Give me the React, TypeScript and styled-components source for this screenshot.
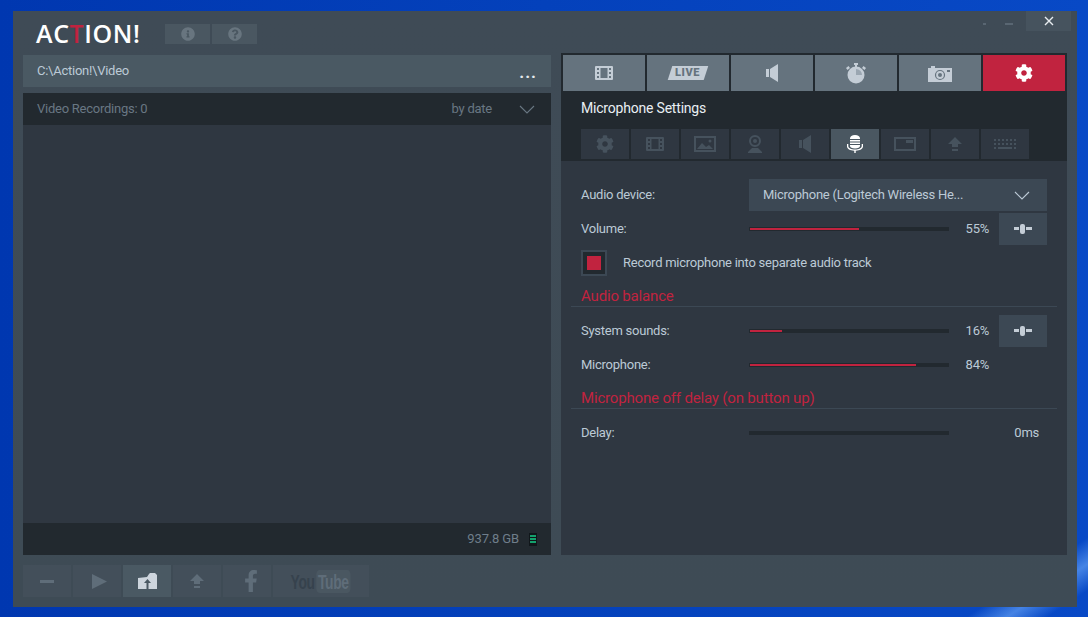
import React from 'react';
import styled, { createGlobalStyle } from 'styled-components';
import { FaCog, FaFacebookF, FaInfoCircle, FaQuestionCircle } from 'react-icons/fa';

const GlobalStyle = createGlobalStyle`
  html, body {
    margin: 0;
    padding: 0;
    height: 100%;
    overflow: hidden;
  }
  body {
    font-family: Roboto, "Liberation Sans", sans-serif;
    background:
      linear-gradient(146.7deg, transparent 94%, rgba(120, 180, 255, 0.55) 96%, transparent 98%),
      linear-gradient(90deg, #0037b0 0%, #0441bb 50%, #0849c6 100%);
  }
`;

const Desktop = styled.div`
  box-sizing: border-box;
  width: 1088px;
  height: 617px;
  padding: 11px 11px 10px 13px;
`;

const Window = styled.div`
  box-sizing: border-box;
  height: 596px;
  padding: 0 10px 10px;
  display: flex;
  flex-direction: column;
  background: linear-gradient(180deg, #3f4b56 0%, #3e4b55 100%);
`;

const TitleBar = styled.header`
  height: 44px;
  flex: none;
  display: flex;
  align-items: flex-start;
`;

const Logo = styled.div`
  width: 104px;
  margin: 10px 25px 0 13px;
  font: 600 25px/24px "Open Sans", sans-serif;
  color: #fff;
  white-space: nowrap;
  letter-spacing: 0.6px;
  span {
    color: #c1233f;
  }
`;

const HelpGroup = styled.div`
  display: flex;
  gap: 2px;
  margin-top: 13px;
`;

const HelpButton = styled.button`
  width: 45px;
  height: 20px;
  padding: 0;
  border: 0;
  display: flex;
  align-items: center;
  justify-content: center;
  font-size: 14px;
  color: #68757f;
  background: #4a5761;
`;

const WindowControls = styled.div`
  margin: 0 -4px 0 auto;
  display: flex;
  align-items: flex-start;
`;

const MinDot = styled.i<{ $w: number }>`
  display: block;
  width: ${({ $w }) => $w}px;
  height: 2px;
  margin: 12px ${({ $w }) => ($w > 4 ? 13 : 19)}px 0 0;
  background: #596672;
`;

const CloseButton = styled.button`
  width: 45px;
  height: 20px;
  padding: 0;
  border: 0;
  display: flex;
  align-items: center;
  justify-content: center;
  color: #e8edf1;
  background: #46535e;
`;

const Main = styled.main`
  flex: 1;
  min-height: 0;
  display: flex;
  gap: 10px;
`;

const LeftColumn = styled.section`
  width: 528px;
  display: flex;
  flex-direction: column;
  gap: 6px;
`;

const PathBar = styled.div`
  height: 32px;
  flex: none;
  display: flex;
  align-items: center;
  justify-content: space-between;
  padding: 0 14px 2px 14px;
  box-sizing: border-box;
  font-size: 13px;
  letter-spacing: -0.25px;
  color: #bccad6;
  background: #4a5963;
`;

const Dots = styled.span`
  font-size: 17px;
  font-weight: 700;
  color: #e4e9ed;
  letter-spacing: 1px;
  margin-top: 4px;
`;

const ListPanel = styled.div`
  flex: 1;
  display: flex;
  flex-direction: column;
  background: #2f3741;
`;

const ListHeader = styled.div`
  height: 32px;
  flex: none;
  display: flex;
  align-items: center;
  padding: 0 16px 0 14px;
  font-size: 13px;
  letter-spacing: -0.25px;
  color: #697783;
  background: #22292f;
  span {
    margin-top: -2px;
  }
`;

const SortLabel = styled.span`
  margin: 0 27px 0 auto;
`;

const ListBody = styled.div`
  flex: 1;
`;

const ListFooter = styled.div`
  height: 32px;
  flex: none;
  display: flex;
  align-items: center;
  justify-content: flex-end;
  gap: 10px;
  padding: 0 14px;
  font-size: 13px;
  letter-spacing: -0.15px;
  color: #6f7e8b;
  background: #22292f;
  span {
    margin-top: -2px;
  }
`;

const Battery = styled.div`
  box-sizing: border-box;
  width: 8px;
  height: 13px;
  padding: 2px 1px;
  display: flex;
  flex-direction: column;
  gap: 1px;
  background: #10161a;
  i {
    flex: 1;
    background: #14a06c;
  }
`;

const RightColumn = styled.section`
  width: 506px;
  margin-top: -2px;
  display: flex;
  flex-direction: column;
  background: #2f3741;
`;

const DarkHead = styled.div`
  flex: none;
  padding: 2px 2px 2px;
  background: #22292f;
`;

const MainTabs = styled.div`
  display: grid;
  grid-template-columns: repeat(6, 82px);
  gap: 2px;
`;

const MainTab = styled.button<{ $active?: boolean }>`
  height: 36px;
  padding: 0;
  border: 0;
  display: flex;
  align-items: center;
  justify-content: center;
  color: ${({ $active }) => ($active ? '#fff' : '#c4cdd6')};
  background: ${({ $active }) => ($active ? '#c1233f' : '#65737e')};
`;

const LiveBadge = styled.span`
  width: 36px;
  height: 14px;
  display: flex;
  align-items: center;
  justify-content: center;
  transform: skewX(-18deg);
  background: #c4cdd6;
  b {
    display: block;
    transform: skewX(18deg);
    font: 900 11px/14px Roboto, sans-serif;
    letter-spacing: 0.6px;
    color: #65737e;
  }
`;

const PanelTitle = styled.h2`
  height: 38px;
  margin: 0;
  padding-left: 18px;
  font-size: 14px;
  font-weight: 400;
  letter-spacing: -0.2px;
  line-height: 34px;
  color: #e9eff4;
`;

const SubTabs = styled.div`
  display: flex;
  gap: 2px;
  padding-left: 18px;
`;

const SubTab = styled.button<{ $active?: boolean }>`
  width: 48px;
  height: 30px;
  padding: 0;
  border: 0;
  display: flex;
  align-items: center;
  justify-content: center;
  color: ${({ $active }) => ($active ? '#fff' : '#46525d')};
  background: ${({ $active }) => ($active ? '#4a5761' : '#2f3741')};
`;

const SettingsBody = styled.div`
  flex: 1;
  padding: 18px 20px 0;
`;

const Row = styled.div<{ $gapBelow?: number }>`
  height: 32px;
  margin-bottom: ${({ $gapBelow }) => $gapBelow ?? 2}px;
  display: grid;
  grid-template-columns: 168px 200px 40px 58px;
  align-items: center;
  font-size: 13px;
  letter-spacing: -0.25px;
  color: #bccad6;
  > span {
    margin-top: -2px;
  }
`;

const SelectBox = styled.div`
  grid-column: 2 / -1;
  height: 32px;
  display: flex;
  align-items: center;
  justify-content: space-between;
  padding: 0 17px 0 14px;
  color: #bccad6;
  background: #3c4854;
  span {
    margin-top: -2px;
  }
`;

const Track = styled.div`
  box-sizing: border-box;
  height: 4px;
  padding: 1px;
  background: #22292f;
`;

const Fill = styled.div`
  height: 2px;
  background: #c1233f;
`;

const Value = styled.span<{ $long?: boolean }>`
  text-align: right;
  grid-column: ${({ $long }) => ($long ? '3 / -1' : 'auto')};
  padding-right: ${({ $long }) => ($long ? 8 : 0)}px;
`;

const TuneButton = styled.button`
  width: 48px;
  height: 32px;
  margin-left: 10px;
  padding: 0;
  border: 0;
  display: flex;
  align-items: center;
  justify-content: center;
  color: #c4cdd6;
  background: #3c4854;
`;

const CheckRow = styled.label`
  height: 26px;
  margin-top: 5px;
  display: flex;
  align-items: center;
  gap: 16px;
  font-size: 13px;
  letter-spacing: -0.25px;
  color: #bccad6;
`;

const CheckText = styled.span`
  margin-top: -2px;
`;

const CheckBox = styled.span`
  box-sizing: border-box;
  width: 26px;
  height: 26px;
  padding: 4px;
  border: 2px solid #3c4854;
  background: #22292f;
  i {
    display: block;
    width: 100%;
    height: 100%;
    background: #c1233f;
  }
`;

const SectionTitle = styled.h3<{ $top: number; $bottom: number }>`
  box-sizing: border-box;
  height: 20px;
  margin: ${({ $top }) => $top}px -10px ${({ $bottom }) => $bottom}px;
  padding-left: 10px;
  border-bottom: 1px solid #3c4854;
  font-size: 15px;
  font-weight: 400;
  letter-spacing: -0.17px;
  line-height: 18px;
  color: #c1233f;
`;

const BottomBar = styled.footer`
  flex: none;
  margin-top: 10px;
  display: flex;
  gap: 2px;
`;

const ToolButton = styled.button<{ $active?: boolean; $wide?: boolean }>`
  width: ${({ $wide }) => ($wide ? 96 : 48)}px;
  height: 32px;
  padding: 0;
  border: 0;
  display: flex;
  align-items: center;
  justify-content: center;
  color: ${({ $active }) => ($active ? '#cdd5dd' : '#5f6d79')};
  background: ${({ $active }) => ($active ? '#4a5963' : '#434f5a')};
`;

const PlayGlyph = styled.svg`
  margin-left: 4px;
`;

const FacebookGlyph = styled(FaFacebookF)`
  margin-left: 8px;
`;

const YouTube = styled.span`
  display: flex;
  align-items: center;
  font: 700 21px/23px "Liberation Sans", sans-serif;
  letter-spacing: -0.5px;
  transform: scaleX(0.66);
  color: #36424d;
  b {
    margin-left: 2px;
    padding: 0 3px;
    border-radius: 5px;
    color: #5f6d79;
    background: #4a5761;
  }
`;

const FilmIcon = () => (
  <svg width="18" height="14" viewBox="0 0 18 14" fill="currentColor">
    <path fillRule="evenodd" d="M1 0h16a1 1 0 0 1 1 1v12a1 1 0 0 1-1 1H1a1 1 0 0 1-1-1V1a1 1 0 0 1 1-1zm1 2v2h2V2H2zm0 4v2h2V6H2zm0 4v2h2v-2H2zm12-8v2h2V2h-2zm0 4v2h2V6h-2zm0 4v2h2v-2h-2zM5.500 2v10h7V2h-7z" />
  </svg>
);

const SpeakerIcon = () => (
  <svg width="12" height="18" viewBox="0 0 12 18" fill="currentColor">
    <path d="M0 5h3v8H0zM4 5l8-5v18l-8-5z" />
  </svg>
);

const TimerIcon = () => (
  <svg width="20" height="21" viewBox="0 0 20 21" fill="currentColor">
    <rect x="8" y="0" width="4" height="2" />
    <rect x="9" y="2" width="2" height="2" />
    <path d="M0 5l2.500-2 1.500 2-2.500 2zM20 5l-2.500-2-1.500 2 2.500 2z" />
    <circle cx="10" cy="12" r="8.500" />
    <path d="M10 6a6 6 0 0 1 6 6h-6z" fill="#9aa6b1" />
  </svg>
);

const CameraIcon = () => (
  <svg width="24" height="17" viewBox="0 0 24 17" fill="currentColor">
    <path d="M0 3h3V1h4v2h17v14H0z" />
    <circle cx="12" cy="10" r="4.500" fill="none" stroke="#65737e" strokeWidth="1.200" />
    <circle cx="12" cy="10" r="2" fill="#65737e" />
    <rect x="19" y="5" width="3" height="2" fill="#65737e" />
  </svg>
);

const ImageIcon = () => (
  <svg width="22" height="16" viewBox="0 0 22 16" fill="currentColor">
    <path fillRule="evenodd" d="M0 0h22v16H0zm2 2v12h18V2z" />
    <circle cx="16" cy="5" r="1.500" />
    <path d="M3 13l5-6 4 4 3-2 4 4z" />
  </svg>
);

const WebcamIcon = () => (
  <svg width="14" height="18" viewBox="0 0 14 18" fill="currentColor">
    <path fillRule="evenodd" d="M7 0a6 6 0 1 1 0 12A6 6 0 0 1 7 0zm0 2a4 4 0 1 0 0 8 4 4 0 0 0 0-8z" />
    <circle cx="7" cy="6" r="2" />
    <path d="M4 13h6l4 4v1H0v-1z" />
  </svg>
);

const MicIcon = () => (
  <svg width="16" height="18" viewBox="0 0 16 18" fill="currentColor">
    <path d="M3 3.500C3 1.500 5 0 8 0s5 1.500 5 3.500V4H3zM3 5h10v1.500H3zM3 7.500h10V9H3zM3 10h10v1C13 12.500 11 13.500 8 13.500S3 12.500 3 11z" />
    <path d="M0 9h1.300v2c0 2 2.800 3.500 6.700 3.500s6.700-1.500 6.700-3.500V9H16v2.500c0 2.300-3 4-7.300 4.200V18H7.300v-2.300C3 15.500 0 13.800 0 11.500z" />
  </svg>
);

const FrameIcon = () => (
  <svg width="22" height="14" viewBox="0 0 22 14" fill="currentColor">
    <path fillRule="evenodd" d="M0 0h22v14H0zm2 2v10h18V2z" />
    <rect x="12" y="3" width="7" height="3" />
  </svg>
);

const UploadIcon = () => (
  <svg width="14" height="15" viewBox="0 0 14 15" fill="currentColor">
    <path d="M7 0l7 7H10v3H4V7H0zM4 12h6v2H4z" />
  </svg>
);

const KeyboardIcon = () => (
  <svg width="22" height="11" viewBox="0 0 22 11" fill="currentColor">
    {[0, 4, 8, 12, 16, 20].map((x) => (
      <rect key={`a${x}`} x={x} y="0" width="2" height="2" />
    ))}
    {[0, 4, 8, 12, 16, 20].map((x) => (
      <rect key={`b${x}`} x={x} y="4" width="2" height="2" />
    ))}
    <rect x="0" y="8" width="2" height="2" />
    <rect x="20" y="8" width="2" height="2" />
    <rect x="4" y="8" width="14" height="2" />
  </svg>
);

const TuneIcon = () => (
  <svg width="18" height="10" viewBox="0 0 18 10" fill="currentColor">
    <rect x="0" y="3" width="5" height="3" />
    <rect x="6" y="0" width="5" height="10" rx="2" />
    <rect x="12" y="3" width="6" height="3" />
  </svg>
);

const Chevron = () => (
  <svg width="16" height="9" viewBox="0 0 16 9" fill="none" stroke="currentColor" strokeWidth="1.100">
    <path d="M1 1l7 7 7-7" />
  </svg>
);

const FolderUpIcon = () => (
  <svg width="19" height="16" viewBox="0 0 19 16" fill="currentColor">
    <path d="M0 5l9-1 2-3 1-1h5l2 2v14H0z" />
    <path d="M9.500 6L6 10h2.500v6h2v-6H13z" fill="#4a5963" />
  </svg>
);

const subTabIcons = [
  <FaCog key="gear" size={18} />,
  <FilmIcon key="film" />,
  <ImageIcon key="image" />,
  <WebcamIcon key="webcam" />,
  <SpeakerIcon key="speaker" />,
  <MicIcon key="mic" />,
  <FrameIcon key="frame" />,
  <UploadIcon key="upload" />,
  <KeyboardIcon key="keyboard" />,
];

const Slider = ({ value }: { value: number }) => (
  <Track>
    <Fill style={{ width: `${value}%` }} />
  </Track>
);

const App = () => (
  <>
    <GlobalStyle />
    <Desktop>
      <Window>
        <TitleBar>
          <Logo>
            AC<span>T</span>ION!
          </Logo>
          <HelpGroup>
            <HelpButton>
              <FaInfoCircle />
            </HelpButton>
            <HelpButton>
              <FaQuestionCircle />
            </HelpButton>
          </HelpGroup>
          <WindowControls>
            <MinDot $w={3} />
            <MinDot $w={8} />
            <CloseButton>
              <svg width="10" height="10" viewBox="0 0 10 10" stroke="currentColor" strokeWidth="1.400">
                <path d="M1 1l8 8M9 1l-8 8" />
              </svg>
            </CloseButton>
          </WindowControls>
        </TitleBar>
        <Main>
          <LeftColumn>
            <PathBar>
              <span>C:\Action!\Video</span>
              <Dots>...</Dots>
            </PathBar>
            <ListPanel>
              <ListHeader>
                <span>Video Recordings: 0</span>
                <SortLabel>by date</SortLabel>
                <Chevron />
              </ListHeader>
              <ListBody />
              <ListFooter>
                <span>937.8 GB</span>
                <Battery>
                  <i />
                  <i />
                  <i />
                </Battery>
              </ListFooter>
            </ListPanel>
          </LeftColumn>
          <RightColumn>
            <DarkHead>
              <MainTabs>
                <MainTab>
                  <FilmIcon />
                </MainTab>
                <MainTab>
                  <LiveBadge>
                    <b>LIVE</b>
                  </LiveBadge>
                </MainTab>
                <MainTab>
                  <SpeakerIcon />
                </MainTab>
                <MainTab>
                  <TimerIcon />
                </MainTab>
                <MainTab>
                  <CameraIcon />
                </MainTab>
                <MainTab $active>
                  <FaCog size={18} />
                </MainTab>
              </MainTabs>
              <PanelTitle>Microphone Settings</PanelTitle>
              <SubTabs>
                {subTabIcons.map((icon, index) => (
                  <SubTab key={index} $active={index === 5}>
                    {icon}
                  </SubTab>
                ))}
              </SubTabs>
            </DarkHead>
            <SettingsBody>
              <Row>
                <span>Audio device:</span>
                <SelectBox>
                  <span>Microphone (Logitech Wireless He...</span>
                  <Chevron />
                </SelectBox>
              </Row>
              <Row $gapBelow={0}>
                <span>Volume:</span>
                <Slider value={55} />
                <Value>55%</Value>
                <TuneButton>
                  <TuneIcon />
                </TuneButton>
              </Row>
              <CheckRow>
                <CheckBox>
                  <i />
                </CheckBox>
                <CheckText>Record microphone into separate audio track</CheckText>
              </CheckRow>
              <SectionTitle $top={11} $bottom={8}>
                Audio balance
              </SectionTitle>
              <Row>
                <span>System sounds:</span>
                <Slider value={16} />
                <Value>16%</Value>
                <TuneButton>
                  <TuneIcon />
                </TuneButton>
              </Row>
              <Row $gapBelow={0}>
                <span>Microphone:</span>
                <Slider value={84} />
                <Value>84%</Value>
              </Row>
              <SectionTitle $top={8} $bottom={8}>
                Microphone off delay (on button up)
              </SectionTitle>
              <Row>
                <span>Delay:</span>
                <Slider value={0} />
                <Value $long>0ms</Value>
              </Row>
            </SettingsBody>
          </RightColumn>
        </Main>
        <BottomBar>
          <ToolButton>
            <svg width="14" height="3" viewBox="0 0 14 3" fill="currentColor">
              <rect width="14" height="3" />
            </svg>
          </ToolButton>
          <ToolButton>
            <PlayGlyph width="15" height="15" viewBox="0 0 15 15" fill="currentColor">
              <path d="M0 0l15 7.500L0 15z" />
            </PlayGlyph>
          </ToolButton>
          <ToolButton $active>
            <FolderUpIcon />
          </ToolButton>
          <ToolButton>
            <UploadIcon />
          </ToolButton>
          <ToolButton>
            <FacebookGlyph size={22} />
          </ToolButton>
          <ToolButton $wide>
            <YouTube>
              You<b>Tube</b>
            </YouTube>
          </ToolButton>
        </BottomBar>
      </Window>
    </Desktop>
  </>
);

export default App;
